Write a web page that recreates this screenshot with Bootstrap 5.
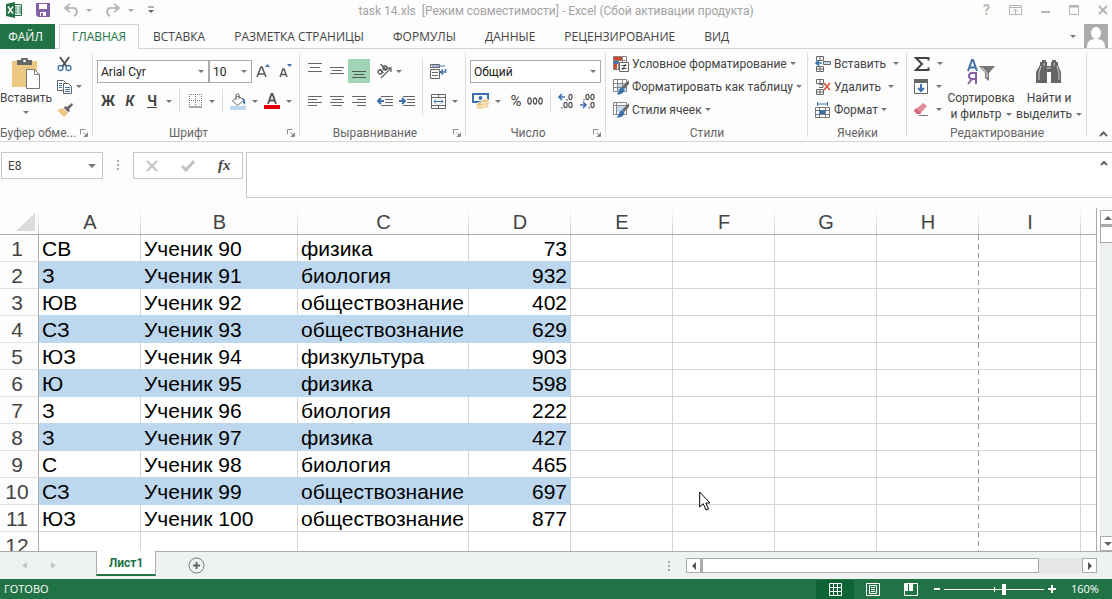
<!DOCTYPE html>
<html lang="ru">
<head>
<meta charset="utf-8">
<meta name="viewport" content="width=device-width, initial-scale=1">
<title>task 14.xls - Excel</title>
<link href="https://cdn.jsdelivr.net/npm/bootstrap@5.3.0/dist/css/bootstrap.min.css" rel="stylesheet">
<style>
:root{--green:#217346;--ink:#444;--line:#d4d4d4;--blue:#3f72a8;--fill:#bdd7ee}
body{font-family:Roboto,"Open Sans",sans-serif;font-size:12px;line-height:16px;color:var(--ink);background:#fdfdfd}
button{border:0;background:none;padding:0;color:inherit;font:inherit;display:inline-flex;align-items:center;justify-content:center;flex:none}
svg{display:block;flex:none}
.titlebar{height:24px}
.doc-title{color:#a3a3a3;line-height:23px}
.quick{left:6px;top:2px}
.quick button{margin-left:14px}
.winctl{right:4px;top:2px;gap:19px;color:#b9b9b9}
.tabs{height:25px;border-bottom:1px solid var(--line);font-family:"Open Sans",sans-serif}
.tabs .nav-link{height:25px;padding:0 15px 0 14px;line-height:25px;color:#444;border-radius:0;white-space:nowrap}
.tabs .tab-file{background:var(--green);color:#fff;width:55px;padding:0 4px 0 0;text-align:center;margin-right:4px}
.tabs .tab-on{color:var(--green);border:1px solid var(--line);border-bottom:0;background:#fdfdfd;width:80px;padding:0;text-align:center;line-height:24px}
.avatar{width:24px;height:24px;background:#ababab}
.ribbon{height:93px;border-bottom:1px solid var(--line)}
.grp{position:relative;display:flex;flex-direction:column;flex:none}
.grp::after{content:"";position:absolute;right:0;top:4px;bottom:4px;border-right:1px solid #dcdcdc}
.grp-body{height:76px}
.grp-label{height:16px;line-height:17px;color:#666;text-align:center;white-space:nowrap}
.launch{position:absolute;right:3px;bottom:2px;width:12px;height:12px}
.g-clip{width:93px}.g-font{width:207px}.g-align{width:166px}.g-num{width:140px}.g-style{width:202px}.g-cell{width:99px}.g-edit{width:180px}
.two{padding:10px 4px 0;display:flex;flex-direction:column;gap:6px}
.two.side{flex-direction:row;gap:4px}
.stack{display:flex;flex-direction:column;gap:6px}
.tool{display:flex;align-items:center;height:24px}
.b22{width:22px;height:24px}
.b12{width:12px;height:24px}
.pct{font-size:15px;width:16px}
.pressed{background:#9fd5b5}
.vsep{width:1px;height:24px;background:#dcdcdc}
.tall{height:56px}
.three{padding:3px 0 0 7px}
.three button{height:23px;gap:3px;justify-content:flex-start;width:max-content;white-space:nowrap}
.three.col-edit{width:40px}
.ribbon .form-select,.ribbon .form-control{height:23px;border:1px solid #ababab;border-radius:0;font-size:12px;line-height:16px;padding:2px 3px 0;color:#222;background-color:#fff}
.ribbon .sel-face{width:112px}.ribbon .sel-size{width:43px}.ribbon .sel-num{width:131px}
.form-select{--bs-form-select-bg-img:url("data:image/svg+xml,%3Csvg xmlns='http://www.w3.org/2000/svg' viewBox='0 0 6 3'%3E%3Cpath fill='%23777' d='M0 0h6L3 3z'/%3E%3C/svg%3E");background-size:6px 3px;background-position:right 4px center}
.big{flex-direction:column;justify-content:flex-start;padding-top:9px}
.paste{width:52px;gap:1px}
.paste+.three{padding-left:5px}
.sortbtn,.findbtn{width:68px}
.fxsign{font:italic 700 15px "Liberation Serif",serif}
.glyph{font-size:14px;font-weight:700}
.formula{height:66px;padding-top:10px}
.boxed{height:27px;border:1px solid #c6c6c6;border-radius:0;background-color:#fff}
.formula .namebox{width:102px;font-size:12px;padding:0 6px;margin-left:1px;color:#444;background-size:8px 4px;background-position:right 6px center}
.grip{margin:8px 14px 0}
.fxbox{width:110px;margin-right:3px}
.formula textarea{height:46px;border:1px solid #c6c6c6;border-right:0;border-radius:0;resize:none;background:#fff}
.sheet{font-family:"Liberation Sans",Arial,sans-serif}
.cells{table-layout:fixed;width:100%;border-collapse:separate;border-spacing:0;font-size:21px;line-height:24px;color:#000;border-right:1px solid #ababab}
.cells th{font-weight:400;color:#444;text-align:center;padding:2px 0 0;white-space:nowrap}
.cells thead th{font-size:20px;height:27px;border-bottom:1px solid #ababab;background:linear-gradient(#fdfdfd,#ccc) right/1px 100% no-repeat}
.cells thead th:last-child{background:none}
.cells tbody th{height:27px;border-right:1px solid #ababab;border-bottom:1px solid #e0e0e0;padding-right:4px}
.cells td{height:27px;padding:2px 3px 0;border-right:1px solid var(--line);border-bottom:1px solid var(--line);white-space:nowrap;background:#fff;overflow:hidden}
.cells td.num{text-align:right}
.cells td.above{border-bottom-color:var(--fill)}
.cells td.band{background:var(--fill);border-color:var(--fill)}
.cells td.brk{border-right:0;background:repeating-linear-gradient(#999 0 5px,#fff 5px 9px) right/1px 100% no-repeat #fff}
.cells td:last-child{border-right:0}
.vscroll{width:12px;flex:none;margin:2px 0 0 3px;background:#eef1f2}
.sbtn{width:15px;height:15px;border:1px solid #ababab;background:#fff}
.vthumb{width:15px;height:18px;border:1px solid #ababab;border-top-width:2px;background:#fff}
.pointer{left:699px;top:283px}
.sheetbar{height:28px;border-top:1px solid #ababab;background:#eef2f3}
.sheetnav{width:96px;padding-left:22px}
.sheet-tab{width:60px;height:25px;margin-top:-1px;background:#fff;border:solid #ababab;border-width:0 1px;border-bottom:2px solid var(--green);color:var(--green);font-weight:700}
.addtab{margin-left:32px}
.hscroll{width:411px;height:15px;background:#e6e6e6;margin-right:15px}
.hthumb{width:338px;height:15px;border:1px solid #ababab;border-left-width:2px;background:#fff}
.status{height:20px;background:var(--green);color:#fff;font-family:"Open Sans",sans-serif;font-size:11px}
.view{width:38px;height:19px}
.view.on{background:#0e6335}
.zoomval{width:41px;margin-left:15px}
.zoomer{appearance:none;width:100px;height:12px;margin:0;background:linear-gradient(#fff,#fff) center/100% 1px no-repeat,linear-gradient(#fff,#fff) center/1px 5px no-repeat}
.zoomer::-webkit-slider-thumb{appearance:none;width:4px;height:11px;background:#fff}
</style>
</head>
<body class="d-flex flex-column vh-100 overflow-hidden">
<svg width="0" height="0" class="position-absolute">
<defs>
<symbol id="dn" viewBox="0 0 6 3"><path d="M0 0h6L3 3z" fill="#777"/></symbol>
<symbol id="launch" viewBox="0 0 9 9"><path d="M.5 6V.5H6M4 4l3 3M8.500 4v4.500H4" fill="none" stroke="#777"/><path d="M8 5v3H5z" fill="#777"/></symbol>
<symbol id="brush" viewBox="0 0 16 16"><path d="M16 1v4l-5 5-2-2z" fill="#666"/><path d="M9 8l2.500 2.500C11 14 8 16 3.500 15.500 6 14 5.500 9.500 9 8z" fill="#3f72a8"/></symbol>
</defs>
</svg>

<header class="titlebar position-relative text-center flex-shrink-0">
  <div class="quick position-absolute d-flex align-items-center">
    <svg width="16" height="16" viewBox="0 0 16 16"><path d="M8 2.500h7.500v11H8" fill="#fff" stroke="#217346"/><path d="M9 5h2.500M12.500 5H15M9 7h2.500M12.500 7H15M9 9h2.500M12.500 9H15M9 11h2.500M12.500 11H15" stroke="#217346"/><path d="M0 2l9-2v16l-9-2z" fill="#217346"/><path d="M2 4.500l5 7M7 4.500l-5 7" stroke="#fff" stroke-width="1.500"/></svg>
    <button type="button" aria-label="Сохранить"><svg width="14" height="14" viewBox="0 0 14 14"><path d="M0 0h14v14H2l-2-2z" fill="#8461a5"/><path d="M3 1h8v5H3zM4 9h6v4H7v-3H5v3H4z" fill="#fff"/></svg></button>
    <button type="button" aria-label="Отменить"><svg width="14" height="14" viewBox="0 0 14 14"><path d="M6 1L1 5l5 4M1.500 5H9c5 0 5 6 1 8" fill="none" stroke="#b9b9b9" stroke-width="2"/></svg></button>
    <svg class="ms-2" width="6" height="3" opacity=".6"><use href="#dn"/></svg>
    <button type="button" aria-label="Вернуть"><svg width="14" height="14" viewBox="0 0 14 14"><path d="M8 1l5 4-5 4M12.500 5H5c-5 0-5 6-1 8" fill="none" stroke="#b9b9b9" stroke-width="2"/></svg></button>
    <svg class="ms-2" width="6" height="3" opacity=".6"><use href="#dn"/></svg>
    <button type="button" aria-label="Настройка панели"><svg width="6" height="8" viewBox="0 0 6 8"><path d="M0 1h6" stroke="#666"/><path d="M0 4h6L3 7z" fill="#666"/></svg></button>
  </div>
  <span class="doc-title">task 14.xls&nbsp; [Режим совместимости] - Excel (Сбой активации продукта)</span>
  <div class="winctl position-absolute d-flex align-items-center">
    <button type="button" class="glyph" aria-label="Справка">?</button>
    <button type="button" aria-label="Параметры ленты"><svg width="13" height="10" viewBox="0 0 13 10"><path d="M.5.5h12v9H.5zM.5 2.500h12M6.500 9V4M4 6.500l2.500-2.500L9 6.500" fill="none" stroke="#b5b5b5"/></svg></button>
    <button type="button" aria-label="Свернуть"><svg width="9" height="10" viewBox="0 0 9 10"><path d="M0 7h9" stroke="#b5b5b5" stroke-width="2"/></svg></button>
    <button type="button" aria-label="Развернуть"><svg width="10" height="10" viewBox="0 0 10 10"><path d="M.5.5h9v9h-9z" fill="none" stroke="#b5b5b5"/><path d="M0 1.500h10" stroke="#b5b5b5" stroke-width="2"/></svg></button>
    <button type="button" aria-label="Закрыть"><svg width="10" height="10" viewBox="0 0 10 10"><path d="M1 1l8 8M9 1L1 9" stroke="#b5b5b5" stroke-width="2"/></svg></button>
  </div>
</header>

<nav class="tabs nav flex-nowrap flex-shrink-0">
  <a class="nav-link tab-file" href="#">ФАЙЛ</a>
  <a class="nav-link tab-on" href="#">ГЛАВНАЯ</a>
  <a class="nav-link" href="#">ВСТАВКА</a>
  <a class="nav-link" href="#">РАЗМЕТКА СТРАНИЦЫ</a>
  <a class="nav-link" href="#">ФОРМУЛЫ</a>
  <a class="nav-link" href="#">ДАННЫЕ</a>
  <a class="nav-link" href="#">РЕЦЕНЗИРОВАНИЕ</a>
  <a class="nav-link" href="#">ВИД</a>
  <div class="ms-auto d-flex align-items-center me-1">
    <svg width="6" height="3" class="me-2"><use href="#dn"/></svg>
    <div class="avatar"><svg width="24" height="24" viewBox="0 0 24 24"><ellipse cx="12" cy="9" rx="5" ry="6" fill="#fff"/><path d="M3 24c0-7 3-9 9-9s9 2 9 9z" fill="#fff"/></svg></div>
  </div>
</nav>

<section class="ribbon d-flex flex-shrink-0">
  <div class="grp g-clip">
    <div class="grp-body d-flex">
      <button type="button" class="big paste"><svg width="28" height="31" viewBox="0 0 28 31"><path d="M0 3h25v26H0z" fill="#ecc883"/><path d="M5 2h4a3 3 0 0 1 7 0h4v5H5z" fill="#666"/><circle cx="12.500" cy="3" r="1.300" fill="#fff"/><path d="M14.500 11.500h8l5 5v14h-13z" fill="#fff" stroke="#777"/><path d="M22.500 11.500v5h5" fill="none" stroke="#777"/></svg><span>Вставить</span><svg width="6" height="3" class="mt-1"><use href="#dn"/></svg></button>
      <div class="d-flex flex-column three">
        <button type="button" aria-label="Вырезать"><svg width="15" height="16" viewBox="0 0 15 16"><path d="M3 1l6.500 9.500M12 1L5.500 10.500" stroke="#555" stroke-width="2"/><circle cx="3.500" cy="12" r="2.500" fill="none" stroke="#3f72a8" stroke-width="1.300"/><circle cx="11.500" cy="12" r="2.500" fill="none" stroke="#3f72a8" stroke-width="1.300"/></svg></button>
        <button type="button" aria-label="Копировать"><svg width="16" height="14" viewBox="0 0 16 14"><path d="M.5.500h6l2 2v8h-8z" fill="#fff" stroke="#666"/><path d="M6.500 3.500h5l3 3v7h-8z" fill="#fff" stroke="#666"/><path d="M2 3.500h3M2 5.500h3M2 7.500h3M8 7.500h5M8 9.500h5M8 11.500h5" stroke="#3f72a8"/></svg><svg width="6" height="3"><use href="#dn"/></svg></button>
        <button type="button" aria-label="Формат по образцу"><svg width="16" height="14" viewBox="0 0 16 14"><path d="M15 0l1 2-4 4 1 2-2 1-4-4 1-2 2 1z" fill="#666"/><path d="M6 5l5 5-4 4-7-7z" fill="#ecc883"/></svg></button>
      </div>
    </div>
    <div class="grp-label text-start">Буфер обме...</div>
    <button type="button" class="launch" aria-label="Буфер обмена"><svg width="8" height="8"><use href="#launch"/></svg></button>
  </div>

  <div class="grp g-font">
    <div class="grp-body two">
      <div class="tool">
        <select class="form-select sel-face" aria-label="Шрифт"><option>Arial Cyr</option></select>
        <select class="form-select sel-size" aria-label="Размер"><option>10</option></select>
        <button type="button" class="b22" aria-label="Увеличить"><svg width="14" height="16" viewBox="0 0 14 16"><path d="M1 14L5 4h1l4 10M2.500 11h6" fill="none" stroke="#555" stroke-width="1.500"/><path d="M9 4h5l-2.500-3z" fill="#3f72a8"/></svg></button>
        <button type="button" class="b22" aria-label="Уменьшить"><svg width="14" height="16" viewBox="0 0 14 16"><path d="M2 14L5 6h1l3 8M3.500 11.500h4" fill="none" stroke="#555" stroke-width="1.400"/><path d="M9 1h5l-2.500 3z" fill="#3f72a8"/></svg></button>
      </div>
      <div class="tool">
        <button type="button" class="b22 glyph">Ж</button>
        <button type="button" class="b22 glyph fst-italic">К</button>
        <button type="button" class="b22 glyph text-decoration-underline">Ч</button>
        <button type="button" class="b12" aria-label="Подчеркивание"><svg width="6" height="3"><use href="#dn"/></svg></button>
        <span class="vsep mx-1"></span>
        <button type="button" class="b22" aria-label="Границы"><svg width="13" height="14" viewBox="0 0 13 14"><path d="M.5 0v12M6.500 0v12M12.500 0v12M0 .5h13M0 6.500h13" stroke="#777" stroke-dasharray="1 1"/><path d="M0 13h13" stroke="#555"/></svg></button>
        <button type="button" class="b12" aria-label="Виды границ"><svg width="6" height="3"><use href="#dn"/></svg></button>
        <span class="vsep mx-1"></span>
        <button type="button" class="b22" aria-label="Заливка"><svg width="17" height="17" viewBox="0 0 17 17"><path d="M8 3L2.500 8l5 4.500L14 7z" fill="#fff" stroke="#666"/><path d="M6 7V1.500Q7.500 0 9 1.500V6" fill="none" stroke="#666"/><path d="M12 5q4 0 3 7-1-2-2-2 1-2-1-5z" fill="#3f72a8"/><path d="M0 13h16v4H0z" fill="#bdd7ee"/></svg></button>
        <button type="button" class="b12" aria-label="Цвет заливки"><svg width="6" height="3"><use href="#dn"/></svg></button>
        <button type="button" class="b22" aria-label="Цвет текста"><svg width="16" height="16" viewBox="0 0 16 16"><path d="M4 11L7.500 1h1L12 11M5 7.500h6" fill="none" stroke="#555" stroke-width="1.800"/><path d="M0 12h16v4H0z" fill="#e80000"/></svg></button>
        <button type="button" class="b12" aria-label="Выбор цвета"><svg width="6" height="3"><use href="#dn"/></svg></button>
      </div>
    </div>
    <div class="grp-label pe-3">Шрифт</div>
    <button type="button" class="launch" aria-label="Параметры шрифта"><svg width="8" height="8"><use href="#launch"/></svg></button>
  </div>

  <div class="grp g-align">
    <div class="grp-body two side">
      <div class="stack">
        <div class="tool">
          <button type="button" class="b22" aria-label="По верхнему краю"><svg width="14" height="16" viewBox="0 0 14 16"><path d="M0 .5h14M2 4.500h10M0 8.500h14" stroke="#666"/></svg></button>
          <button type="button" class="b22" aria-label="По середине"><svg width="14" height="16" viewBox="0 0 14 16"><path d="M0 4.500h14M2 7.500h10M0 10.500h14" stroke="#666"/></svg></button>
          <button type="button" class="b22 pressed" aria-label="По нижнему краю"><svg width="14" height="16" viewBox="0 0 14 16"><path d="M0 8.500h14M2 11.500h10M0 14.500h14" stroke="#555"/></svg></button>
          <button type="button" class="b22 ms-1" aria-label="Ориентация"><svg width="18" height="16" viewBox="0 0 18 16"><g fill="none" stroke="#555" stroke-width="1.300"><circle cx="4" cy="9" r="2"/><path d="M3.500 6l4 4"/><circle cx="9" cy="5" r="2"/><path d="M4.500 1l6 6"/></g><path d="M5 15L15 5M15 9V5h-4" fill="none" stroke="#666" stroke-width="1.300"/></svg></button>
          <svg width="6" height="3"><use href="#dn"/></svg>
        </div>
        <div class="tool">
          <button type="button" class="b22" aria-label="По левому краю"><svg width="14" height="11" viewBox="0 0 14 11"><path d="M0 .5h14M0 3.500h9M0 6.500h14M0 9.500h9" stroke="#666"/></svg></button>
          <button type="button" class="b22" aria-label="По центру"><svg width="14" height="11" viewBox="0 0 14 11"><path d="M0 .5h14M2 3.500h10M0 6.500h14M2 9.500h10" stroke="#666"/></svg></button>
          <button type="button" class="b22" aria-label="По правому краю"><svg width="14" height="11" viewBox="0 0 14 11"><path d="M0 .5h14M5 3.500h9M0 6.500h14M5 9.500h9" stroke="#666"/></svg></button>
          <button type="button" class="b22 ms-1" aria-label="Уменьшить отступ"><svg width="16" height="11" viewBox="0 0 16 11"><path d="M4 .5h12M8 3.500h8M8 6.500h8M4 9.500h12" stroke="#666"/><path d="M7 5H1M4 2L1 5l3 3" stroke="#3f72a8" stroke-width="2" fill="none"/></svg></button>
          <button type="button" class="b22" aria-label="Увеличить отступ"><svg width="16" height="11" viewBox="0 0 16 11"><path d="M4 .5h12M8 3.500h8M8 6.500h8M4 9.500h12" stroke="#666"/><path d="M0 5h6M3 2l3 3-3 3" stroke="#3f72a8" stroke-width="2" fill="none"/></svg></button>
        </div>
      </div>
      <span class="vsep tall"></span>
      <div class="stack">
        <div class="tool"><button type="button" class="b22" aria-label="Перенос текста"><svg width="17" height="17" viewBox="0 0 17 17"><path d="M.5 1.500h9v3h-9zM.5 6.500h9v9h-9zM2 9.500h6M2 12.500h6" fill="none" stroke="#666"/><path d="M2 3h13" stroke="#3f72a8"/><path d="M15.500 6v3H11M13 6.500L10.500 9l2.500 2.500" fill="none" stroke="#3f72a8" stroke-width="1.500"/></svg></button></div>
        <div class="tool"><button type="button" class="b22" aria-label="Объединить"><svg width="15" height="15" viewBox="0 0 15 15"><path d="M.5.500h14v14H.5zM.5 3.500h14M.5 11.500h14M7.500 0v3M7.500 12v3" fill="none" stroke="#666"/><path d="M3 7.500h9M5 5.500l-2 2 2 2M10 5.500l2 2-2 2" fill="none" stroke="#3f72a8"/></svg></button><button type="button" class="b12" aria-label="Варианты"><svg width="6" height="3"><use href="#dn"/></svg></button></div>
      </div>
    </div>
    <div class="grp-label pe-3">Выравнивание</div>
    <button type="button" class="launch" aria-label="Параметры выравнивания"><svg width="8" height="8"><use href="#launch"/></svg></button>
  </div>

  <div class="grp g-num">
    <div class="grp-body two">
      <div class="tool"><select class="form-select sel-num" aria-label="Числовой формат"><option>Общий</option></select></div>
      <div class="tool">
        <button type="button" class="b22" aria-label="Финансовый"><svg width="18" height="16" viewBox="0 0 18 16"><path d="M1 1h15v8H1z" fill="#fff" stroke="#3f72a8" stroke-width="2"/><circle cx="8.500" cy="5" r="2" fill="#3f72a8"/><g fill="#ecc883" stroke="#fff" stroke-width=".7"><ellipse cx="13" cy="13" rx="4" ry="2"/><ellipse cx="13" cy="10.500" rx="4" ry="2"/><ellipse cx="13" cy="8" rx="4" ry="2"/><ellipse cx="8" cy="14" rx="4" ry="2"/><ellipse cx="8" cy="11.500" rx="4" ry="2"/></g></svg></button>
        <button type="button" class="b12" aria-label="Валюта"><svg width="6" height="3"><use href="#dn"/></svg></button>
        <button type="button" class="pct ms-1">%</button>
        <button type="button" class="b22" aria-label="Разделители"><svg width="16" height="8" viewBox="0 0 16 8"><g fill="none" stroke="#555" stroke-width="1.300"><ellipse cx="2.500" cy="4" rx="1.700" ry="3"/><ellipse cx="8" cy="4" rx="1.700" ry="3"/><ellipse cx="13.500" cy="4" rx="1.700" ry="3"/></g></svg></button>
        <span class="vsep mx-1"></span>
        <button type="button" class="b22" aria-label="Увеличить разрядность"><svg width="16" height="16" viewBox="0 0 16 16"><path d="M7 4H1M4 1L1 4l3 3" fill="none" stroke="#3f72a8" stroke-width="1.700"/><g fill="none" stroke="#555" stroke-width="1.200"><ellipse cx="12.500" cy="4" rx="1.600" ry="2.700"/><ellipse cx="7.500" cy="12" rx="1.600" ry="2.700"/><ellipse cx="12.500" cy="12" rx="1.600" ry="2.700"/><path d="M9 6v1.500M4 14v1.500"/></g></svg></button>
        <button type="button" class="b22" aria-label="Уменьшить разрядность"><svg width="16" height="16" viewBox="0 0 16 16"><path d="M0 12h6M3 9l3 3-3 3" fill="none" stroke="#3f72a8" stroke-width="1.700"/><g fill="none" stroke="#555" stroke-width="1.200"><ellipse cx="7.500" cy="4" rx="1.600" ry="2.700"/><ellipse cx="12.500" cy="4" rx="1.600" ry="2.700"/><ellipse cx="12.500" cy="12" rx="1.600" ry="2.700"/><path d="M4 6v1.500M9 14v1.500"/></g></svg></button>
      </div>
    </div>
    <div class="grp-label pe-3">Число</div>
    <button type="button" class="launch" aria-label="Параметры числа"><svg width="8" height="8"><use href="#launch"/></svg></button>
  </div>

  <div class="grp g-style">
    <div class="grp-body d-flex flex-column three">
      <button type="button"><svg width="16" height="16" viewBox="0 0 16 16"><path d="M.5.500h13v13H.5zM0 4.500h13M5.500 0v13M9.500 0v6" fill="#fff" stroke="#888"/><path d="M1 1h8v3H1zM1 8h3v5H1z" fill="#d24726"/><path d="M1 5h4v3H1z" fill="#3f72a8"/><path d="M6.500 6.500h9v9h-9z" fill="#fff" stroke="#666"/><path d="M8.500 9.500h5M8.500 12.500h5M12.500 8l-3 6" stroke="#444"/></svg>Условное форматирование<svg width="6" height="3"><use href="#dn"/></svg></button>
      <button type="button"><svg width="16" height="16" viewBox="0 0 16 16"><path d="M5 5h9v8H5z" fill="#c5dcf0"/><path d="M.5.500h13v12H.5zM0 4.500h14M0 8.500h14M4.500 0v13M9.500 0v13" fill="none" stroke="#888"/><use href="#brush" width="16" height="16"/></svg>Форматировать как таблицу<svg width="6" height="3"><use href="#dn"/></svg></button>
      <button type="button"><svg width="16" height="16" viewBox="0 0 16 16"><path d="M3 3h9v7H3z" fill="#c5dcf0"/><path d="M.5.500h13v12H.5zM0 3.500h14M3.500 0v13" fill="none" stroke="#888"/><use href="#brush" width="16" height="16"/></svg>Стили ячеек<svg width="6" height="3"><use href="#dn"/></svg></button>
    </div>
    <div class="grp-label">Стили</div>
  </div>

  <div class="grp g-cell">
    <div class="grp-body d-flex flex-column three">
      <button type="button"><svg width="16" height="16" viewBox="0 0 16 16"><path d="M1.500.500h7v4h-7zM5 0v4M1.500 10.500h7v5h-7zM5 10v5M1.500 13h7" fill="none" stroke="#666"/><path d="M8.500 5.500h7v3h-7z" fill="#c5dcf0" stroke="#666"/><path d="M7 7H1M4 4.500L1 7l3 2.500" fill="none" stroke="#3f72a8" stroke-width="1.700"/></svg>Вставить<svg width="6" height="3" class="ms-1"><use href="#dn"/></svg></button>
      <button type="button"><svg width="16" height="16" viewBox="0 0 16 16"><path d="M1.500.500h7v4h-7zM5 0v4M1.500 10.500h7v5h-7zM5 10v5M4 5.500h4v3H4M1.500 13h7" fill="none" stroke="#666"/><path d="M9 4l6 7M15 4l-6 7" stroke="#d9593d" stroke-width="1.800"/></svg>Удалить<svg width="6" height="3" class="ms-1"><use href="#dn"/></svg></button>
      <button type="button"><svg width="16" height="16" viewBox="0 0 16 16"><path d="M2 2h11M2.500 0v4M12.500 0v4" stroke="#3f72a8"/><path d="M.5 5.500h14v10H.5zM0 8.500h15M0 12.500h15M4.500 5v11M10.500 5v11" fill="#fff" stroke="#777"/><path d="M4 8h6v4H4z" fill="#3f72a8"/></svg>Формат<svg width="6" height="3"><use href="#dn"/></svg></button>
    </div>
    <div class="grp-label">Ячейки</div>
  </div>

  <div class="grp g-edit">
    <div class="grp-body d-flex">
      <div class="d-flex flex-column three col-edit">
        <button type="button" aria-label="Сумма"><svg width="16" height="14" viewBox="0 0 16 14"><path d="M14.500 3.500V1H2l6 6-6 6h12.500v-2.500" fill="none" stroke="#444" stroke-width="2"/></svg><svg width="6" height="3" class="ms-1"><use href="#dn"/></svg></button>
        <button type="button" aria-label="Заполнить"><svg width="15" height="15" viewBox="0 0 15 15"><path d="M.5.500h13v14H.5z" fill="#fff" stroke="#666"/><path d="M0 0h14v4H0z" fill="#666"/><path d="M7 5v7M4 9l3 3 3-3" stroke="#3f72a8" stroke-width="2" fill="none"/></svg><svg width="6" height="3" class="ms-1"><use href="#dn"/></svg></button>
        <button type="button" aria-label="Очистить"><svg width="15" height="13" viewBox="0 0 15 13"><path d="M9 0l4 3-7 8H3L0 8z" fill="#e58a9a"/><path d="M2 5l5 5-1 1H3L0 8z" fill="#d9647a"/><path d="M5 12.500h9" stroke="#777"/></svg><svg width="6" height="3" class="ms-1"><use href="#dn"/></svg></button>
      </div>
      <button type="button" class="big sortbtn"><svg width="28" height="32" viewBox="0 -1 28 32"><path d="M1 12L5 1h1l4 11M2.500 8.500h6" fill="none" stroke="#3f72a8" stroke-width="2"/><path d="M9 25V14H5q-3 0-3 3t3 3h4M5 20l-4 5" fill="none" stroke="#8461a5" stroke-width="2"/><path d="M12 7h16l-6 7v8l-4-3v-5z" fill="#777"/><path d="M15 8.500l5 6v4" stroke="#fff" fill="none"/></svg><span>Сортировка</span><span class="d-flex align-items-center gap-1">и фильтр<svg width="6" height="3"><use href="#dn"/></svg></span></button>
      <button type="button" class="big findbtn"><svg width="28" height="32" viewBox="0 1 28 32"><path d="M5 8V5h2V3h4v2h1v4h4V5h1V3h4v2h2v3l3 7v11H16V15h-4v11H1V15z" fill="#666"/><path d="M6 9l-2 7v7M9 6v3M19 6v3M22 9l2 7v7M12 11h4" stroke="#ccc" fill="none"/></svg><span>Найти и</span><span class="d-flex align-items-center gap-1">выделить<svg width="6" height="3"><use href="#dn"/></svg></span></button>
    </div>
    <div class="grp-label">Редактирование</div>
  </div>
  <button type="button" class="ms-auto align-self-end me-1 pb-1" aria-label="Свернуть ленту"><svg width="9" height="6" viewBox="0 0 9 6"><path d="M1 5l3.500-3.500L8 5" fill="none" stroke="#666" stroke-width="2"/></svg></button>
</section>

<section class="formula d-flex flex-shrink-0">
  <select class="form-select boxed namebox" aria-label="Имя ячейки"><option>E8</option></select>
  <svg class="grip" width="2" height="10" viewBox="0 0 2 10"><path d="M0 1h2M0 5h2M0 9h2" stroke="#aaa" stroke-width="2"/></svg>
  <div class="boxed fxbox d-flex justify-content-around">
    <button type="button" aria-label="Отмена"><svg width="12" height="12" viewBox="0 0 12 12"><path d="M1 1l10 10M11 1L1 11" stroke="#c3c3c3" stroke-width="2"/></svg></button>
    <button type="button" aria-label="Ввод"><svg width="14" height="12" viewBox="0 0 14 12"><path d="M1 6l4 4 8-9" stroke="#c3c3c3" stroke-width="3" fill="none"/></svg></button>
    <button type="button" class="fxsign">fx</button>
  </div>
  <textarea class="form-control flex-fill w-auto" aria-label="Строка формул"></textarea>
  <button type="button" class="position-absolute end-0 me-1 mt-2" aria-label="Свернуть строку"><svg width="8" height="6" viewBox="0 0 8 6"><path d="M1 5l3-3 3 3" fill="none" stroke="#666" stroke-width="2"/></svg></button>
</section>

<main class="sheet d-flex flex-fill overflow-hidden position-relative">
  <div class="flex-fill overflow-hidden">
    <table class="cells">
      <colgroup><col style="width:39px"><col style="width:102px"><col style="width:157px"><col style="width:171px"><col style="width:102px"><col style="width:102px"><col style="width:102px"><col style="width:102px"><col style="width:102px"><col style="width:102px"><col></colgroup>
      <thead><tr><th><svg class="ms-auto me-1" width="19" height="18" viewBox="0 0 19 18"><path d="M19 0v18H0z" fill="#dcdcdc"/></svg></th><th>A</th><th>B</th><th>C</th><th>D</th><th>E</th><th>F</th><th>G</th><th>H</th><th>I</th><th></th></tr></thead>
      <tbody id="rows"></tbody>
    </table>
  </div>
  <div class="vscroll d-flex flex-column overflow-hidden">
    <button type="button" class="sbtn" aria-label="Вверх"><svg width="8" height="4" viewBox="0 0 8 4"><path d="M0 4h8L4 0z" fill="#666"/></svg></button>
    <div class="vthumb"></div>
    <button type="button" class="sbtn mt-auto" aria-label="Вниз"><svg width="8" height="4" viewBox="0 0 8 4"><path d="M0 0h8L4 4z" fill="#666"/></svg></button>
  </div>
  <svg class="pointer position-absolute" width="13" height="20" viewBox="0 0 13 20"><path d="M.7 1v15l3.500-3.300L7 19l2.500-1-2.700-6H11z" fill="#fff" stroke="#000"/></svg>
</main>

<footer class="flex-shrink-0">
  <div class="sheetbar d-flex align-items-start">
    <div class="d-flex align-items-center gap-4 h-100 sheetnav">
      <svg width="5" height="7" viewBox="0 0 5 7"><path d="M5 0v7L0 3.500z" fill="#c3c7c8"/></svg>
      <svg width="5" height="7" viewBox="0 0 5 7"><path d="M0 0v7l5-3.500z" fill="#c3c7c8"/></svg>
    </div>
    <button type="button" class="sheet-tab">Лист1</button>
    <button type="button" class="h-100 addtab" aria-label="Новый лист"><svg width="17" height="17" viewBox="0 0 17 17"><circle cx="8.500" cy="8.500" r="7.500" fill="none" stroke="#777"/><path d="M8.500 5v7M5 8.500h7" stroke="#666" stroke-width="2"/></svg></button>
    <div class="ms-auto d-flex align-items-center h-100">
      <svg class="me-3" width="2" height="10" viewBox="0 0 2 10"><path d="M0 1h2M0 5h2M0 9h2" stroke="#aaa" stroke-width="2"/></svg>
      <div class="hscroll d-flex">
        <button type="button" class="sbtn" aria-label="Влево"><svg width="4" height="8" viewBox="0 0 4 8"><path d="M4 0v8L0 4z" fill="#555"/></svg></button>
        <div class="hthumb"></div>
        <button type="button" class="sbtn ms-auto" aria-label="Вправо"><svg width="4" height="8" viewBox="0 0 4 8"><path d="M0 0v8l4-4z" fill="#555"/></svg></button>
      </div>
    </div>
  </div>
  <div class="status d-flex align-items-center">
    <span class="px-1">ГОТОВО</span>
    <div class="ms-auto d-flex align-items-center">
      <button type="button" class="view on" aria-label="Обычный"><svg width="13" height="13" viewBox="0 0 13 13"><path d="M.5.500h12v12H.5zM4.500 0v13M8.500 0v13M0 4.500h13M0 8.500h13" fill="none" stroke="#fff"/></svg></button>
      <button type="button" class="view" aria-label="Разметка страницы"><svg width="14" height="13" viewBox="0 0 14 13"><path d="M.5.500h13v12H.5zM3.500 2.500h7v8h-7zM5 4.500h4M5 6.500h4M5 8.500h4" fill="none" stroke="#fff"/></svg></button>
      <button type="button" class="view" aria-label="Страничный режим"><svg width="14" height="13" viewBox="0 0 14 13"><path d="M.5.500h13v12H.5z" fill="none" stroke="#fff"/><path d="M1 1h3v7H1zM5 1h4v7H5z" fill="#fff"/></svg></button>
      <button type="button" class="ms-1" aria-label="Уменьшить масштаб"><svg width="6" height="10" viewBox="0 0 6 10"><path d="M0 5h6" stroke="#fff" stroke-width="2"/></svg></button>
      <input type="range" class="zoomer mx-1" min="0" max="100" value="60" aria-label="Масштаб">
      <button type="button" aria-label="Увеличить масштаб"><svg width="8" height="8" viewBox="0 0 8 8"><path d="M0 4h8M4 0v8" stroke="#fff" stroke-width="2"/></svg></button>
      <span class="zoomval">160%</span>
    </div>
  </div>
</footer>

<script src="https://cdn.jsdelivr.net/npm/bootstrap@5.3.0/dist/js/bootstrap.bundle.min.js"></script>
<script>
const data = [
  ["СВ","Ученик 90","физика",73],["З","Ученик 91","биология",932],["ЮВ","Ученик 92","обществознание",402],
  ["СЗ","Ученик 93","обществознание",629],["ЮЗ","Ученик 94","физкультура",903],["Ю","Ученик 95","физика",598],
  ["З","Ученик 96","биология",222],["З","Ученик 97","физика",427],["С","Ученик 98","биология",465],
  ["СЗ","Ученик 99","обществознание",697],["ЮЗ","Ученик 100","обществознание",877],["","","",""]
];
// Even rows are banded; column H ends at the print page break.
document.getElementById("rows").innerHTML = data.map((row, i) => {
  const band = i % 2 === 1 && i < 11 ? "band" : (i % 2 === 0 && i < 10 ? "above" : "");
  const filled = row.map((v, c) => `<td class="${band}${c === 3 ? " num" : ""}">${v}</td>`).join("");
  const empty = [0,1,2,3,4,5].map(c => `<td${c === 3 ? ' class="brk"' : ""}></td>`).join("");
  return `<tr><th scope="row">${i + 1}</th>${filled}${empty}</tr>`;
}).join("");
</script>
</body>
</html>
